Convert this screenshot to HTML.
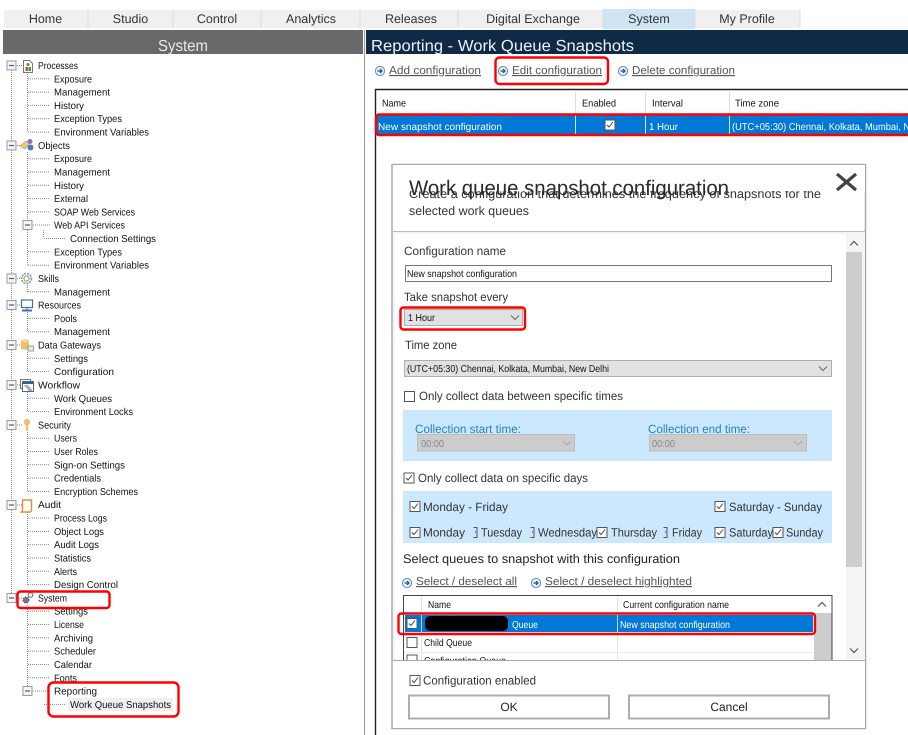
<!DOCTYPE html>
<html lang="en"><head><meta charset="utf-8"><title>Work Queue Snapshots</title>
<style>
html,body{margin:0;padding:0;background:#fff;width:908px;height:735px;overflow:hidden}
svg{display:block;filter:blur(.3px)}
text{font-family:"Liberation Sans",sans-serif;text-rendering:geometricPrecision}
.t{font-size:10px;fill:#111}
.tab{font-size:12.5px;fill:#333;text-anchor:middle}
.l{font-size:12px;fill:#333}
.s{font-size:10px;fill:#111}
.a{font-size:11.5px;fill:#555;text-decoration:underline}
</style></head><body>
<svg width="908" height="735" viewBox="0 0 908 735" xmlns="http://www.w3.org/2000/svg">
<defs>
<g id="cb"><rect x=".5" y=".5" width="10" height="10" fill="#fff" stroke="#555"/></g>
<g id="ck"><rect x=".5" y=".5" width="10" height="10" fill="#fff" stroke="#555"/><path d="M2.5 5.5l2 2 4-5" fill="none" stroke="#444" stroke-width="1"/></g>
<g id="ln"><circle cx="0" cy="0" r="4.6" fill="#e8f0f8" stroke="#5d8fc0"/><path d="M-2.5 0h4M0-2l2 2-2 2" fill="none" stroke="#1f4e80" stroke-width="1.2"/></g>
<g id="bx"><rect x="-4.5" y="-4.5" width="9" height="9" fill="#f4f4f4" stroke="#999"/><path d="M-2.5 0h5" stroke="#3f5f9f" stroke-width="1.2"/></g>
</defs>

<!-- Tabs -->
<rect x="4" y="10" width="796" height="18" fill="#f0f0f0"/>
<rect x="603" y="9" width="92" height="20" fill="#cfe4f5"/>
<path d="M88 10v18M173 10v18M261 10v18M360 10v18M458 10v18M603 10v18M695 10v18M800 10v18" stroke="#dcdcdc"/>
<text class="tab" x="45.5" y="23">Home</text>
<text class="tab" x="130.5" y="23">Studio</text>
<text class="tab" x="217" y="23">Control</text>
<text class="tab" x="311" y="23">Analytics</text>
<text class="tab" x="411" y="23">Releases</text>
<text class="tab" x="533" y="23">Digital Exchange</text>
<text class="tab" x="649" y="23">System</text>
<text class="tab" x="747" y="23">My Profile</text>

<!-- Header bars -->
<rect x="3" y="30" width="360" height="24" fill="#696969"/>
<text x="183" y="51" font-size="16" fill="#e8e8e8" text-anchor="middle" textLength="50" lengthAdjust="spacingAndGlyphs">System</text>
<rect x="366" y="30" width="542" height="24" fill="#0e2a47"/>
<text x="371" y="51" font-size="16" fill="#eef2f6" textLength="263" lengthAdjust="spacingAndGlyphs">Reporting - Work Queue Snapshots</text>
<path d="M364.5 30V735" stroke="#999"/>

<!-- Tree lines -->
<g fill="none" stroke="#8a8a8a" stroke-dasharray="1 1">
<path d="M11.5 70V598M27.5 72V132M27.5 152V265M27.5 285V292M27.5 312V332M27.5 352V372M27.5 392V411M27.5 432V491M27.5 512V585M27.5 605V687"/>
<path d="M43.5 230V238"/>
<path d="M17 65.5h5M17 145.5h5M17 278.5h5M17 305h5M17 345h5M17 385h5M17 425h5M17 505h5M17 598h5M33 225h17M33 691h17"/>
<path d="M28 78.8h22M28 92.1h22M28 105.4h22M28 118.7h22M28 132.1h22M28 158.7h22M28 172h22M28 185.3h22M28 198.6h22M28 211.9h22M28 251.8h22M28 265.2h22M28 291.8h22M28 318.4h22M28 331.7h22M28 358.3h22M28 371.6h22M28 398.3h22M28 411.6h22M28 438.2h22M28 451.5h22M28 464.8h22M28 478.1h22M28 491.4h22M28 518h22M28 531.4h22M28 544.7h22M28 558h22M28 571.3h22M28 584.6h22M28 611.2h22M28 624.5h22M28 637.8h22M28 651.1h22M28 664.5h22M28 677.8h22M44 238.5h22M44 704.4h22"/>
</g>
<use href="#bx" x="11.5" y="65.5"/><use href="#bx" x="11.5" y="145.5"/><use href="#bx" x="11.5" y="278.5"/><use href="#bx" x="11.5" y="305"/><use href="#bx" x="11.5" y="345"/><use href="#bx" x="11.5" y="385"/><use href="#bx" x="11.5" y="425"/><use href="#bx" x="11.5" y="505"/><use href="#bx" x="11.5" y="598"/><use href="#bx" x="27.5" y="225"/><use href="#bx" x="27.5" y="691"/>

<!-- Tree icons -->
<g>
<path d="M23.5 60.5h6l3 3v9h-9z" fill="#fff" stroke="#777"/><rect x="25.5" y="67" width="2.5" height="4" fill="#c0504d"/><rect x="28.5" y="67" width="2.5" height="4" fill="#3f8f5f"/><circle cx="28" cy="64.5" r="1.5" fill="#a06030"/>
<path d="M20 146l6-5 4 2-5 6z" fill="#e8c878" stroke="#c8a050" stroke-width=".7"/><circle cx="30" cy="141.5" r="2.5" fill="#8a70c8"/><circle cx="30.5" cy="147.5" r="3" fill="#3f7fc8"/>
<circle cx="26.5" cy="278.5" r="5" fill="#fff" stroke="#5da0e0" stroke-width="1.6" stroke-dasharray="2 1"/><circle cx="26.5" cy="278.5" r="2.6" fill="none" stroke="#e8a040" stroke-width="1.4"/>
<rect x="21.5" y="300" width="11" height="7.5" fill="#fff" stroke="#3f6fa8" stroke-width="1.2"/><path d="M27 308v2" stroke="#3f6fa8"/><rect x="22" y="309.5" width="10" height="2" fill="#3f6fa8"/>
<rect x="21" y="340" width="8" height="9.5" rx="1.5" fill="#f0c070"/><ellipse cx="25" cy="340.5" rx="4" ry="1.5" fill="#f7d898"/><rect x="28" y="346" width="5.5" height="5" fill="#dff0e4" stroke="#5fa070" stroke-width=".8"/>
<rect x="20.5" y="379.5" width="10" height="9" fill="#fff" stroke="#777"/><rect x="22.5" y="381.5" width="11" height="10" fill="#fff" stroke="#666"/><rect x="23" y="382" width="10" height="2" fill="#2f5f9f"/><path d="M24.5 386h4M26.5 388h4M28 390h4" stroke="#2f5f9f"/>
<circle cx="27" cy="422" r="3.2" fill="#eec26a"/><rect x="25.8" y="424" width="2.4" height="7" fill="#eec26a"/>
<path d="M22.5 500h9v10q0 2-2 2h-8q1-1 1-2z" fill="#fff" stroke="#e8883a" stroke-width="1.4"/>
<circle cx="26" cy="600" r="3" fill="#777" stroke="#555" stroke-dasharray="1.5 1"/><circle cx="30.5" cy="595" r="2.3" fill="#fff" stroke="#777" stroke-width="1.2"/>
</g>

<!-- Tree labels -->
<rect x="68" y="698" width="105" height="13" fill="#f0f0f0"/>
<g>
<text class="t" x="38" y="69" textLength="40" lengthAdjust="spacingAndGlyphs">Processes</text>
<text class="t" x="54" y="82.3" textLength="38" lengthAdjust="spacingAndGlyphs">Exposure</text>
<text class="t" x="54" y="95.6" textLength="56" lengthAdjust="spacingAndGlyphs">Management</text>
<text class="t" x="54" y="108.9" textLength="30" lengthAdjust="spacingAndGlyphs">History</text>
<text class="t" x="54" y="122.2" textLength="68" lengthAdjust="spacingAndGlyphs">Exception Types</text>
<text class="t" x="54" y="135.6" textLength="95" lengthAdjust="spacingAndGlyphs">Environment Variables</text>
<text class="t" x="38" y="148.9" textLength="32" lengthAdjust="spacingAndGlyphs">Objects</text>
<text class="t" x="54" y="162.2" textLength="38" lengthAdjust="spacingAndGlyphs">Exposure</text>
<text class="t" x="54" y="175.5" textLength="56" lengthAdjust="spacingAndGlyphs">Management</text>
<text class="t" x="54" y="188.8" textLength="30" lengthAdjust="spacingAndGlyphs">History</text>
<text class="t" x="54" y="202.1" textLength="34" lengthAdjust="spacingAndGlyphs">External</text>
<text class="t" x="54" y="215.4" textLength="81" lengthAdjust="spacingAndGlyphs">SOAP Web Services</text>
<text class="t" x="54" y="228.7" textLength="71" lengthAdjust="spacingAndGlyphs">Web API Services</text>
<text class="t" x="70" y="242" textLength="86" lengthAdjust="spacingAndGlyphs">Connection Settings</text>
<text class="t" x="54" y="255.3" textLength="68" lengthAdjust="spacingAndGlyphs">Exception Types</text>
<text class="t" x="54" y="268.7" textLength="95" lengthAdjust="spacingAndGlyphs">Environment Variables</text>
<text class="t" x="38" y="282" textLength="21" lengthAdjust="spacingAndGlyphs">Skills</text>
<text class="t" x="54" y="295.3" textLength="56" lengthAdjust="spacingAndGlyphs">Management</text>
<text class="t" x="38" y="308.6" textLength="43" lengthAdjust="spacingAndGlyphs">Resources</text>
<text class="t" x="54" y="321.9" textLength="23" lengthAdjust="spacingAndGlyphs">Pools</text>
<text class="t" x="54" y="335.2" textLength="56" lengthAdjust="spacingAndGlyphs">Management</text>
<text class="t" x="38" y="348.5" textLength="63" lengthAdjust="spacingAndGlyphs">Data Gateways</text>
<text class="t" x="54" y="361.8" textLength="34" lengthAdjust="spacingAndGlyphs">Settings</text>
<text class="t" x="54" y="375.1" textLength="60" lengthAdjust="spacingAndGlyphs">Configuration</text>
<text class="t" x="38" y="388.4" textLength="42" lengthAdjust="spacingAndGlyphs">Workflow</text>
<text class="t" x="54" y="401.8" textLength="58" lengthAdjust="spacingAndGlyphs">Work Queues</text>
<text class="t" x="54" y="415.1" textLength="79" lengthAdjust="spacingAndGlyphs">Environment Locks</text>
<text class="t" x="38" y="428.4" textLength="33" lengthAdjust="spacingAndGlyphs">Security</text>
<text class="t" x="54" y="441.7" textLength="23" lengthAdjust="spacingAndGlyphs">Users</text>
<text class="t" x="54" y="455" textLength="44" lengthAdjust="spacingAndGlyphs">User Roles</text>
<text class="t" x="54" y="468.3" textLength="71" lengthAdjust="spacingAndGlyphs">Sign-on Settings</text>
<text class="t" x="54" y="481.6" textLength="47" lengthAdjust="spacingAndGlyphs">Credentials</text>
<text class="t" x="54" y="494.9" textLength="84" lengthAdjust="spacingAndGlyphs">Encryption Schemes</text>
<text class="t" x="38" y="508.2" textLength="23" lengthAdjust="spacingAndGlyphs">Audit</text>
<text class="t" x="54" y="521.5" textLength="53" lengthAdjust="spacingAndGlyphs">Process Logs</text>
<text class="t" x="54" y="534.9" textLength="50" lengthAdjust="spacingAndGlyphs">Object Logs</text>
<text class="t" x="54" y="548.2" textLength="45" lengthAdjust="spacingAndGlyphs">Audit Logs</text>
<text class="t" x="54" y="561.5" textLength="37" lengthAdjust="spacingAndGlyphs">Statistics</text>
<text class="t" x="54" y="574.8" textLength="23" lengthAdjust="spacingAndGlyphs">Alerts</text>
<text class="t" x="54" y="588.1" textLength="64" lengthAdjust="spacingAndGlyphs">Design Control</text>
<text class="t" x="38" y="601.4" textLength="29" lengthAdjust="spacingAndGlyphs">System</text>
<text class="t" x="54" y="614.7" textLength="34" lengthAdjust="spacingAndGlyphs">Settings</text>
<text class="t" x="54" y="628" textLength="30" lengthAdjust="spacingAndGlyphs">License</text>
<text class="t" x="54" y="641.3" textLength="39" lengthAdjust="spacingAndGlyphs">Archiving</text>
<text class="t" x="54" y="654.6" textLength="42" lengthAdjust="spacingAndGlyphs">Scheduler</text>
<text class="t" x="54" y="668" textLength="38" lengthAdjust="spacingAndGlyphs">Calendar</text>
<text class="t" x="54" y="681.3" textLength="23" lengthAdjust="spacingAndGlyphs">Fonts</text>
<text class="t" x="54" y="694.6" textLength="43" lengthAdjust="spacingAndGlyphs">Reporting</text>
<text class="t" x="70" y="707.9" textLength="101" lengthAdjust="spacingAndGlyphs">Work Queue Snapshots</text>
</g>
<rect x="17.5" y="591.5" width="92" height="16.5" rx="3" fill="none" stroke="#f00" stroke-width="2.4"/>
<rect x="48.5" y="682.5" width="130" height="34" rx="5" fill="none" stroke="#f00" stroke-width="2.4"/>

<!-- Action links -->
<use href="#ln" x="380" y="71"/><use href="#ln" x="503" y="71"/><use href="#ln" x="623" y="71"/>
<text class="a" x="389" y="74" textLength="92" lengthAdjust="spacingAndGlyphs">Add configuration</text>
<text class="a" x="512" y="74" textLength="90" lengthAdjust="spacingAndGlyphs">Edit configuration</text>
<text class="a" x="632" y="74" textLength="103" lengthAdjust="spacingAndGlyphs">Delete configuration</text>
<rect x="495.5" y="57.5" width="112.5" height="26.5" rx="4" fill="none" stroke="#f00" stroke-width="2.4"/>

<!-- Grid -->
<path d="M375.5 735V89.5H908" fill="none" stroke="#222" stroke-width="1.4"/>
<rect x="376" y="115" width="532" height="19" fill="#0078d7"/>
<path d="M575.5 90v44M645.5 90v44M729.5 90v44" stroke="#ddd"/>
<text class="s" x="382" y="106.5" textLength="24" lengthAdjust="spacingAndGlyphs">Name</text>
<text class="s" x="582" y="106.5" textLength="34" lengthAdjust="spacingAndGlyphs">Enabled</text>
<text class="s" x="652" y="106.5" textLength="31" lengthAdjust="spacingAndGlyphs">Interval</text>
<text class="s" x="735" y="106.5" textLength="44" lengthAdjust="spacingAndGlyphs">Time zone</text>
<text x="378" y="130" font-size="10" fill="#fff" textLength="124" lengthAdjust="spacingAndGlyphs">New snapshot configuration</text>
<use href="#ck" x="604.5" y="119.5"/>
<text x="649" y="130" font-size="10" fill="#fff" textLength="29" lengthAdjust="spacingAndGlyphs">1 Hour</text>
<text x="732" y="130" font-size="10" fill="#fff" textLength="190" lengthAdjust="spacingAndGlyphs">(UTC+05:30) Chennai, Kolkata, Mumbai, New</text>
<rect x="376" y="114.5" width="540" height="20.5" rx="3" fill="none" stroke="#f00" stroke-width="2.4"/>

<!-- Dialog -->
<rect x="392" y="164.5" width="473.5" height="564" fill="#fff" stroke="#a8a8a8" stroke-width="1.5"/>
<text class="l" x="409" y="198" style="font-size:12.5px" textLength="412" lengthAdjust="spacingAndGlyphs">Create a configuration that determines the frequency of snapshots for the</text>
<text class="l" x="409" y="215" style="font-size:12.5px" textLength="120" lengthAdjust="spacingAndGlyphs">selected work queues</text>
<rect x="393" y="165" width="472" height="26" fill="#fff"/>
<text x="409" y="195" font-size="21" fill="#2a2a2a" textLength="320" lengthAdjust="spacingAndGlyphs">Work queue snapshot configuration</text>
<path d="M837 174l19 16M856 174l-19 16" stroke="#444" stroke-width="3.2"/>
<path d="M392 231.5h474" stroke="#bbb"/>
<rect x="393" y="232" width="472" height="429" fill="#f4f4f4"/>
<rect x="395" y="234" width="451" height="427" fill="#fff"/>
<rect x="846" y="252" width="16" height="315" fill="#cdcdcd"/>
<path d="M850 245.5l4-4 4 4M850 648.5l4 4 4-4" fill="none" stroke="#555" stroke-width="1.2"/>

<text class="l" x="404" y="255" textLength="102" lengthAdjust="spacingAndGlyphs">Configuration name</text>
<rect x="405.5" y="265.5" width="426" height="16" fill="#fff" stroke="#777"/>
<text class="s" x="407" y="277" textLength="110" lengthAdjust="spacingAndGlyphs">New snapshot configuration</text>

<text class="l" x="404" y="301" textLength="104" lengthAdjust="spacingAndGlyphs">Take snapshot every</text>
<rect x="404.5" y="309.5" width="118" height="16" fill="#e1e1e1" stroke="#adadad"/>
<text class="s" x="408" y="321" textLength="27" lengthAdjust="spacingAndGlyphs">1 Hour</text>
<path d="M511 315.5l4 4 4-4" fill="none" stroke="#666"/>
<rect x="400.5" y="307.5" width="124.5" height="22" rx="3" fill="none" stroke="#f00" stroke-width="2.4"/>

<text class="l" x="405" y="349" textLength="52" lengthAdjust="spacingAndGlyphs">Time zone</text>
<rect x="404.5" y="360.5" width="427" height="16" fill="#e1e1e1" stroke="#adadad"/>
<text class="s" x="407" y="372" textLength="202" lengthAdjust="spacingAndGlyphs">(UTC+05:30) Chennai, Kolkata, Mumbai, New Delhi</text>
<path d="M819 366.5l4 4 4-4" fill="none" stroke="#666"/>

<use href="#cb" x="404" y="391"/>
<text class="l" x="419" y="400" textLength="204" lengthAdjust="spacingAndGlyphs">Only collect data between specific times</text>

<rect x="403" y="410" width="429" height="51" fill="#cce8ff"/>
<text x="415" y="433" font-size="12" fill="#2a7fc0" textLength="106" lengthAdjust="spacingAndGlyphs">Collection start time:</text>
<text x="648" y="433" font-size="12" fill="#2a7fc0" textLength="102" lengthAdjust="spacingAndGlyphs">Collection end time:</text>
<rect x="417.5" y="434.5" width="157" height="16.5" fill="#ccc" stroke="#bbb"/>
<rect x="649.5" y="434.5" width="157" height="16.5" fill="#ccc" stroke="#bbb"/>
<text x="421" y="447" font-size="10" fill="#888" textLength="23" lengthAdjust="spacingAndGlyphs">00:00</text>
<text x="652" y="447" font-size="10" fill="#888" textLength="23" lengthAdjust="spacingAndGlyphs">00:00</text>
<path d="M563 441l4 4 4-4M794 441l4 4 4-4" fill="none" stroke="#aaa"/>

<use href="#ck" x="403.5" y="472.5"/>
<text class="l" x="418" y="482" textLength="170" lengthAdjust="spacingAndGlyphs">Only collect data on specific days</text>

<rect x="403" y="491" width="429" height="52" fill="#cce8ff"/>
<use href="#ck" x="409.5" y="501"/>
<text class="l" x="423" y="511" textLength="85" lengthAdjust="spacingAndGlyphs">Monday - Friday</text>
<use href="#ck" x="714.5" y="501"/>
<text class="l" x="729" y="511" textLength="93" lengthAdjust="spacingAndGlyphs">Saturday - Sunday</text>
<use href="#ck" x="409.5" y="527"/>
<text class="l" x="423" y="536.5" textLength="42" lengthAdjust="spacingAndGlyphs">Monday</text>
<path d="M473.5 527.5h3.500v10h-3.500M475 532.5l1-1M530.5 527.5h3.500v10h-3.500M532 532.5l1-1M663.5 527.5h3.500v10h-3.500M665 532.5l1-1" fill="none" stroke="#555"/>
<text class="l" x="481" y="536.5" textLength="41" lengthAdjust="spacingAndGlyphs">Tuesday</text>
<text class="l" x="538" y="536.5" textLength="59" lengthAdjust="spacingAndGlyphs">Wednesday</text>
<use href="#ck" x="596.5" y="527"/>
<text class="l" x="611" y="536.5" textLength="46" lengthAdjust="spacingAndGlyphs">Thursday</text>
<text class="l" x="672" y="536.5" textLength="30" lengthAdjust="spacingAndGlyphs">Friday</text>
<use href="#ck" x="714.5" y="527"/>
<text class="l" x="729" y="536.5" textLength="44" lengthAdjust="spacingAndGlyphs">Saturday</text>
<use href="#ck" x="772.5" y="527"/>
<text class="l" x="786" y="536.5" textLength="37" lengthAdjust="spacingAndGlyphs">Sunday</text>

<text x="403" y="563" font-size="12.5" fill="#222" textLength="277" lengthAdjust="spacingAndGlyphs">Select queues to snapshot with this configuration</text>
<use href="#ln" x="407" y="583"/><use href="#ln" x="536" y="583"/>
<text class="a" x="416" y="585" textLength="101" lengthAdjust="spacingAndGlyphs">Select / deselect all</text>
<text class="a" x="545" y="585" textLength="147" lengthAdjust="spacingAndGlyphs">Select / deselect highlighted</text>

<!-- Queue list -->
<path d="M403.5 661V595.5H832V661" fill="none" stroke="#444"/>
<rect x="814" y="613" width="17.5" height="48" fill="#cdcdcd"/>
<path d="M818 606.5l4-4 4 4" fill="none" stroke="#555" stroke-width="1.2"/>
<path d="M421.5 596v65M617.5 596v65" stroke="#e4e4e4"/>
<path d="M404 652.5h410" stroke="#eee"/>
<text class="s" x="428" y="608" textLength="23" lengthAdjust="spacingAndGlyphs">Name</text>
<text class="s" x="623" y="608" textLength="106" lengthAdjust="spacingAndGlyphs">Current configuration name</text>
<rect x="405" y="615" width="408" height="17" fill="#0078d7"/>
<path d="M421.5 615v17M617.5 615v17" stroke="#bcd8f0"/>
<use href="#ck" x="406.5" y="618"/>
<rect x="425" y="616" width="83" height="15" rx="5" fill="#000"/>
<text x="512" y="628" font-size="10" fill="#fff" textLength="26" lengthAdjust="spacingAndGlyphs">Queue</text>
<text x="620" y="628" font-size="10" fill="#fff" textLength="110" lengthAdjust="spacingAndGlyphs">New snapshot configuration</text>
<rect x="398.5" y="613.5" width="416.5" height="20.5" rx="3" fill="none" stroke="#f00" stroke-width="2.4"/>
<use href="#cb" x="406.5" y="637"/>
<text class="s" x="424" y="646" textLength="48" lengthAdjust="spacingAndGlyphs">Child Queue</text>
<use href="#cb" x="406.5" y="654.5"/>
<text class="s" x="424" y="664" textLength="82" lengthAdjust="spacingAndGlyphs">Configuration Queue</text>

<!-- Footer -->
<rect x="393" y="661" width="472" height="67" fill="#fff"/>
<path d="M392 660.5h474" stroke="#aaa"/>
<use href="#ck" x="409.5" y="675"/>
<text class="l" x="423" y="684.5" textLength="113" lengthAdjust="spacingAndGlyphs">Configuration enabled</text>
<rect x="409" y="695.5" width="200" height="23" fill="#fff" stroke="#adadad" stroke-width="2"/>
<rect x="629" y="695.5" width="200" height="23" fill="#fff" stroke="#adadad" stroke-width="2"/>
<text x="509" y="711" font-size="12" fill="#222" text-anchor="middle">OK</text>
<text x="729" y="711" font-size="12" fill="#222" text-anchor="middle">Cancel</text>
</svg>
</body></html>
